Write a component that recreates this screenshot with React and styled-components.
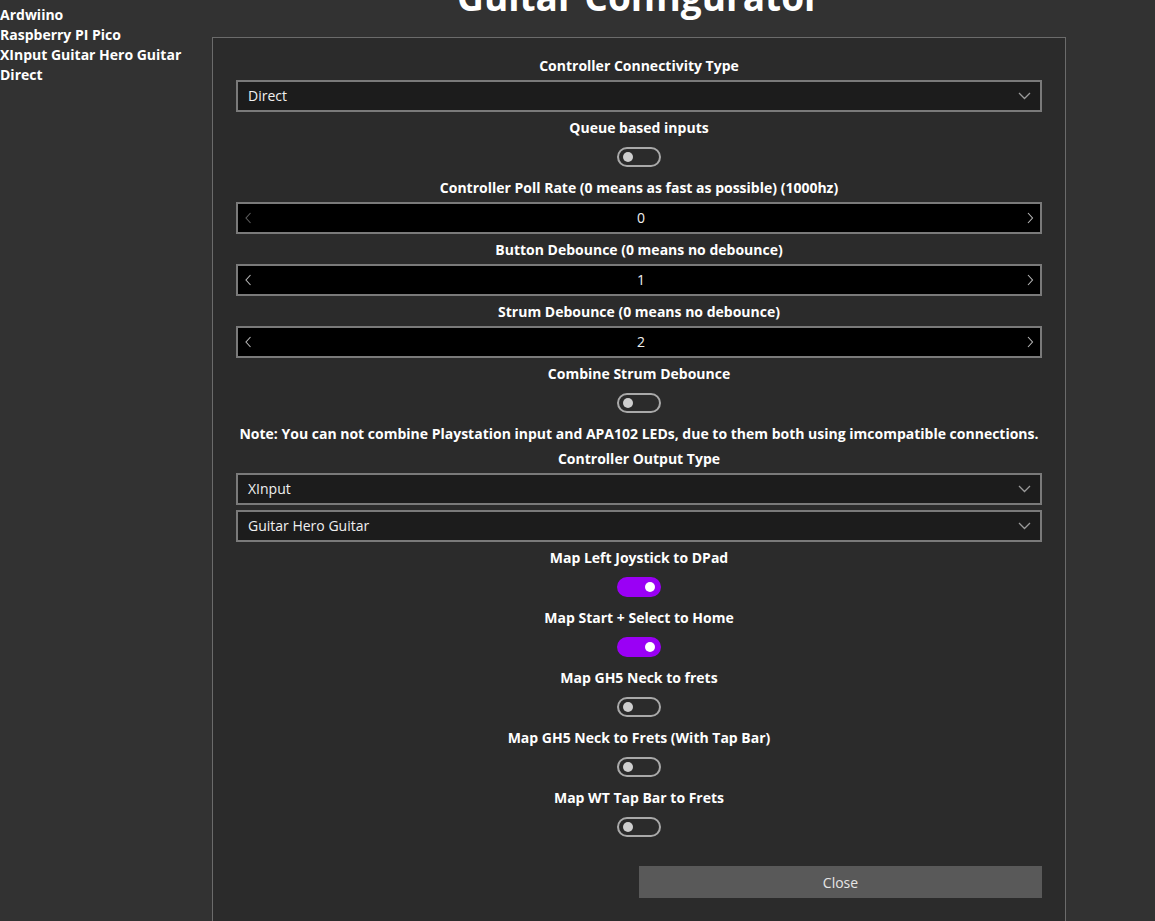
import React from "react";
import styled, { createGlobalStyle } from "styled-components";

const Global = createGlobalStyle`
  html, body { margin: 0; padding: 0; background: #323232; }
  body { font-family: "Open Sans", "Noto Sans", sans-serif; color: #ffffff; font-size: 14px; overflow: hidden; }
  * { box-sizing: border-box; }
`;

const Page = styled.div`
  display: grid;
  grid-template-columns: 212px 854px;
  align-items: start;
  height: 921px;
`;

const Sidebar = styled.nav`
  display: flex;
  flex-direction: column;
  padding-top: 5px;
`;

const SideItem = styled.div`
  font-weight: 700;
  font-size: 14px;
  line-height: 20px;
  white-space: nowrap;
`;

const Main = styled.main`
  display: flex;
  flex-direction: column;
  margin-top: -25px;
`;

const Title = styled.h1`
  margin: 0 0 18px;
  font-size: 37px;
  line-height: 44px;
  font-weight: 700;
  text-align: center;
`;

const Panel = styled.section`
  border: 1px solid #6b6b6b;
  border-bottom: none;
  background: #2b2b2b;
  padding: 17px 23px 40px;
`;

const Label = styled.div`
  font-weight: 700;
  font-size: 14px;
  height: 20px;
  padding-top: 2px;
  line-height: 18px;
  text-align: center;
  white-space: nowrap;
  margin-bottom: ${(p) => p.$mb || 0}px;
`;

const Select = styled.div`
  height: 32px;
  margin: 5px 0;
  border: 2px solid #7a7a7a;
  background: #1c1c1c;
  display: flex;
  align-items: center;
  justify-content: space-between;
  padding: 0 9px 1px 10px;
  font-size: 14px;
  color: #f0f0f0;
`;

const Numeric = styled.div`
  height: 32px;
  margin: 5px 0;
  border: 2px solid #7a7a7a;
  background: #000;
  display: grid;
  grid-template-columns: 20px 1fr 20px;
  align-items: center;
  padding-bottom: 1px;
  font-size: 14px;
  color: #f0f0f0;
`;

const NumValue = styled.span`
  text-align: center;
  padding-left: 4px;
`;

const Arrow = styled.span`
  display: flex;
  justify-content: center;
  color: ${(p) => (p.$disabled ? "#5e5e5e" : "#b8b8b8")};
`;

const ToggleRow = styled.div`
  height: 40px;
  display: flex;
  align-items: center;
  justify-content: center;
`;

const Toggle = styled.div`
  width: 44px;
  height: 20px;
  border-radius: 10px;
  border: 2px solid ${(p) => (p.$on ? "#9a00f5" : "#a9a9a9")};
  background: ${(p) => (p.$on ? "#9a00f5" : "transparent")};
  display: flex;
  align-items: center;
  justify-content: ${(p) => (p.$on ? "flex-end" : "flex-start")};
  padding: 0 4px;
`;

const Knob = styled.div`
  width: 10px;
  height: 10px;
  border-radius: 50%;
  background: ${(p) => (p.$on ? "#ffffff" : "#cfcfcf")};
`;

const Actions = styled.div`
  display: grid;
  grid-template-columns: 1fr 1fr;
  margin-top: 19px;
`;

const Button = styled.button`
  grid-column: 2;
  height: 32px;
  border: none;
  background: #595959;
  color: #e6e6e6;
  font-family: inherit;
  font-size: 14px;
`;

const Chevron = ({ dir }) => {
  if (dir === "down")
    return (
      <svg width="13" height="8" viewBox="0 0 13 8">
        <polyline points="1,1 6.5,6.5 12,1" fill="none" stroke="#9a9a9a" strokeWidth="1.3" />
      </svg>
    );
  const pts = dir === "left" ? "5.5,1 1,6 5.5,11" : "1,1 5.5,6 1,11";
  return (
    <svg width="7" height="12" viewBox="0 0 7 12">
      <polyline points={pts} fill="none" stroke="currentColor" strokeWidth="1.1" />
    </svg>
  );
};

const Dropdown = ({ value }) => (
  <Select>
    <span>{value}</span>
    <Chevron dir="down" />
  </Select>
);

const Spinner = ({ value, min }) => (
  <Numeric>
    <Arrow $disabled={min}>
      <Chevron dir="left" />
    </Arrow>
    <NumValue>{value}</NumValue>
    <Arrow>
      <Chevron dir="right" />
    </Arrow>
  </Numeric>
);

const Switch = ({ on }) => (
  <ToggleRow>
    <Toggle $on={on}>
      <Knob $on={on} />
    </Toggle>
  </ToggleRow>
);

export default function App() {
  return (
    <>
      <Global />
      <Page>
        <Sidebar>
          <SideItem>Ardwiino</SideItem>
          <SideItem>Raspberry PI Pico</SideItem>
          <SideItem>XInput Guitar Hero Guitar</SideItem>
          <SideItem>Direct</SideItem>
        </Sidebar>
        <Main>
          <Title>Guitar Configurator</Title>
          <Panel>
            <Label>Controller Connectivity Type</Label>
            <Dropdown value="Direct" />
            <Label>Queue based inputs</Label>
            <Switch />
            <Label>Controller Poll Rate (0 means as fast as possible) (1000hz)</Label>
            <Spinner value="0" min />
            <Label>Button Debounce (0 means no debounce)</Label>
            <Spinner value="1" />
            <Label>Strum Debounce (0 means no debounce)</Label>
            <Spinner value="2" />
            <Label>Combine Strum Debounce</Label>
            <Switch />
            <Label $mb={5}>
              Note: You can not combine Playstation input and APA102 LEDs, due to them both using imcompatible connections.
            </Label>
            <Label>Controller Output Type</Label>
            <Dropdown value="XInput" />
            <Dropdown value="Guitar Hero Guitar" />
            <Label>Map Left Joystick to DPad</Label>
            <Switch on />
            <Label>Map Start + Select to Home</Label>
            <Switch on />
            <Label>Map GH5 Neck to frets</Label>
            <Switch />
            <Label>Map GH5 Neck to Frets (With Tap Bar)</Label>
            <Switch />
            <Label>Map WT Tap Bar to Frets</Label>
            <Switch />
            <Actions>
              <Button>Close</Button>
            </Actions>
          </Panel>
        </Main>
      </Page>
    </>
  );
}
